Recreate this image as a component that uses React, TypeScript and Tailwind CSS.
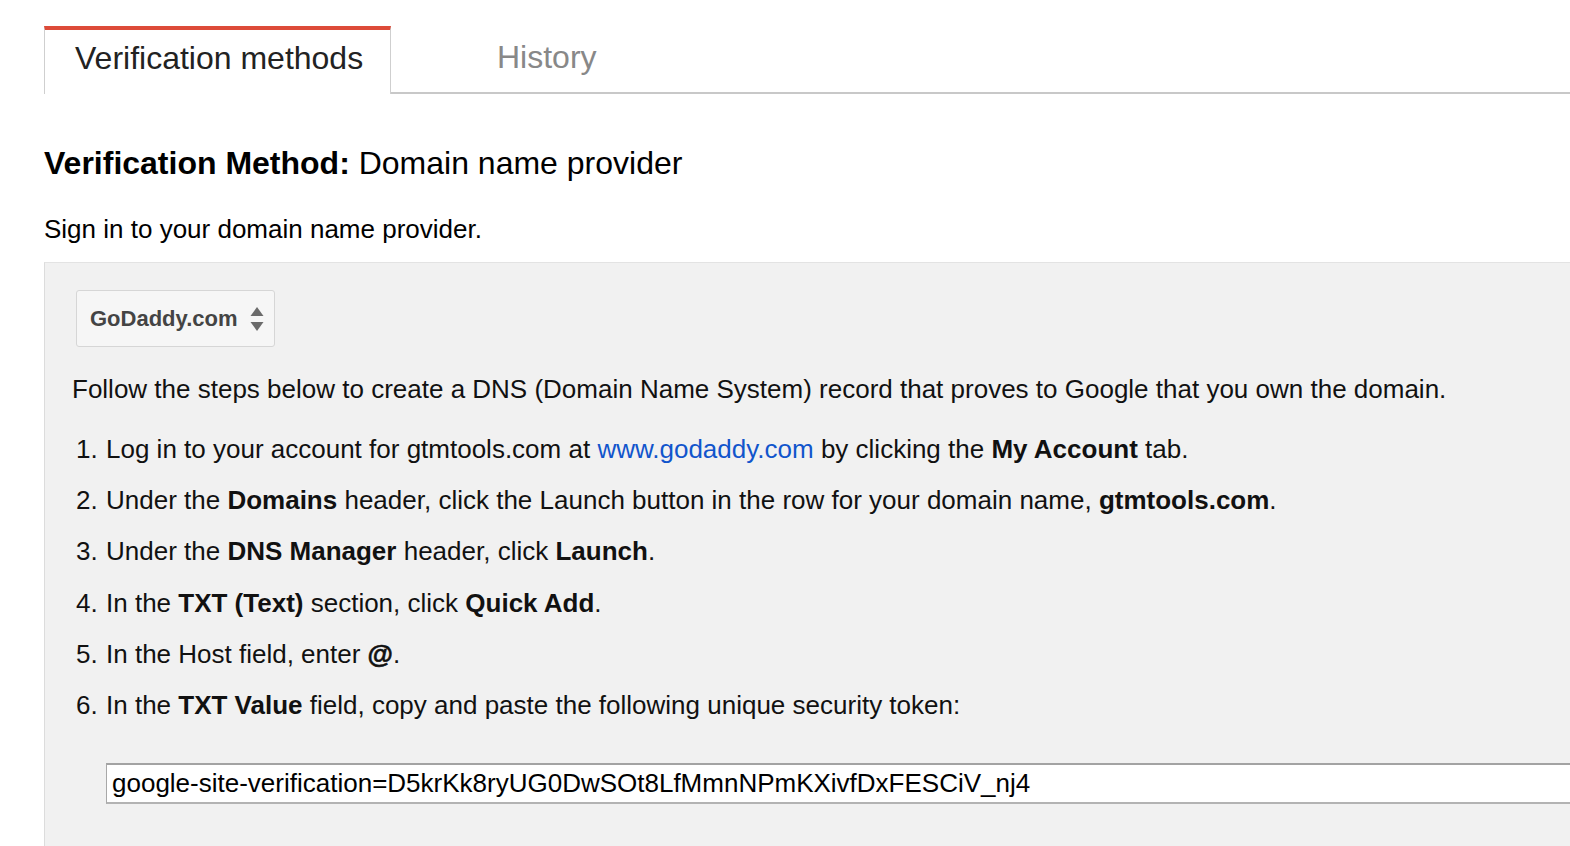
import React from 'react'

const steps: React.ReactNode[] = [
  <>
    Log in to your account for gtmtools.com at{' '}
    <a href="#" className="text-[#1155cc]">www.godaddy.com</a> by clicking the <b>My Account</b> tab.
  </>,
  <>
    Under the <b>Domains</b> header, click the Launch button in the row for your domain name, <b>gtmtools.com</b>.
  </>,
  <>
    Under the <b>DNS Manager</b> header, click <b>Launch</b>.
  </>,
  <>
    In the <b>TXT (Text)</b> section, click <b>Quick Add</b>.
  </>,
  <>
    In the Host field, enter <b className="font-bold [-webkit-text-stroke:0.6px_#111]">@</b>.
  </>,
  <>
    In the <b>TXT Value</b> field, copy and paste the following unique security token:
  </>,
]

function SelectArrows() {
  return (
    <svg width="16" height="26" viewBox="0 0 16 26" className="ml-[11px]">
      <path d="M8 1 L14.5 10 L1.5 10 Z" fill="#6b6b6b" />
      <path d="M8 25 L14.5 16 L1.5 16 Z" fill="#6b6b6b" />
    </svg>
  )
}

export default function App() {
  return (
    <div className="min-h-screen bg-white overflow-hidden text-[#1a1a1a] font-['Liberation_Sans',Arial,sans-serif]">
      {/* Tabs */}
      <div className="flex items-stretch pl-[44px] pt-[26px] h-[94px]">
        <div className="w-[347px] border-t-[4px] border-t-[#dd4b39] border-x border-x-[#cfcfcf] bg-white flex items-center pl-[30px] text-[32px] text-[#222] pb-[9px]">
          Verification methods
        </div>
        <div className="border-b-2 border-b-[#c8c8c8] flex items-center pl-[106px] pr-[40px] text-[32px] text-[#888] pb-[4px]">
          History
        </div>
        <div className="flex-1 border-b-2 border-b-[#c8c8c8]" />
      </div>

      <div className="pl-[44px]">
        <h1 className="mt-[50px] text-[32px] leading-[38px] text-black">
          <span className="font-bold">Verification Method:</span> Domain name provider
        </h1>

        <p className="mt-[32px] text-[26px] leading-[30px] text-black">Sign in to your domain name provider.</p>

        {/* Instructions panel */}
        <div className="mt-[18px] w-[1700px] bg-[#f1f1f1] border-t border-t-[#e3e3e3] border-l border-l-[#dcdcdc] pl-[27px] pt-[27px] pb-[60px]">
          <div className="ml-[4px] w-[199px] h-[57px] border border-[#d6d6d6] rounded-[3px] bg-[#f6f6f6] flex items-center pl-[13px] text-[22px] font-bold text-[#444]">
            GoDaddy.com
            <SelectArrows />
          </div>

          <p className="mt-[27px] text-[26px] leading-[30px] text-[#111]">
            Follow the steps below to create a DNS (Domain Name System) record that proves to Google that you own the domain.
          </p>

          <ol className="mt-[20px] ml-[4px] text-[26px] leading-[51.2px] text-[#111]">
            {steps.map((s, i) => (
              <li key={i} className="flex">
                <span className="w-[30px] shrink-0">{i + 1}.</span>
                <span>{s}</span>
              </li>
            ))}
          </ol>

          <div className="mt-[32px] ml-[34px] h-[41px] bg-white border-y-2 border-t-[#a3a3a3] border-b-[#b3b3b3] border-l border-l-[#a8a8a8] flex items-center pl-[5px] text-[26px] text-black">
            google-site-verification=D5krKk8ryUG0DwSOt8LfMmnNPmKXivfDxFESCiV_nj4
          </div>
        </div>
      </div>
    </div>
  )
}
